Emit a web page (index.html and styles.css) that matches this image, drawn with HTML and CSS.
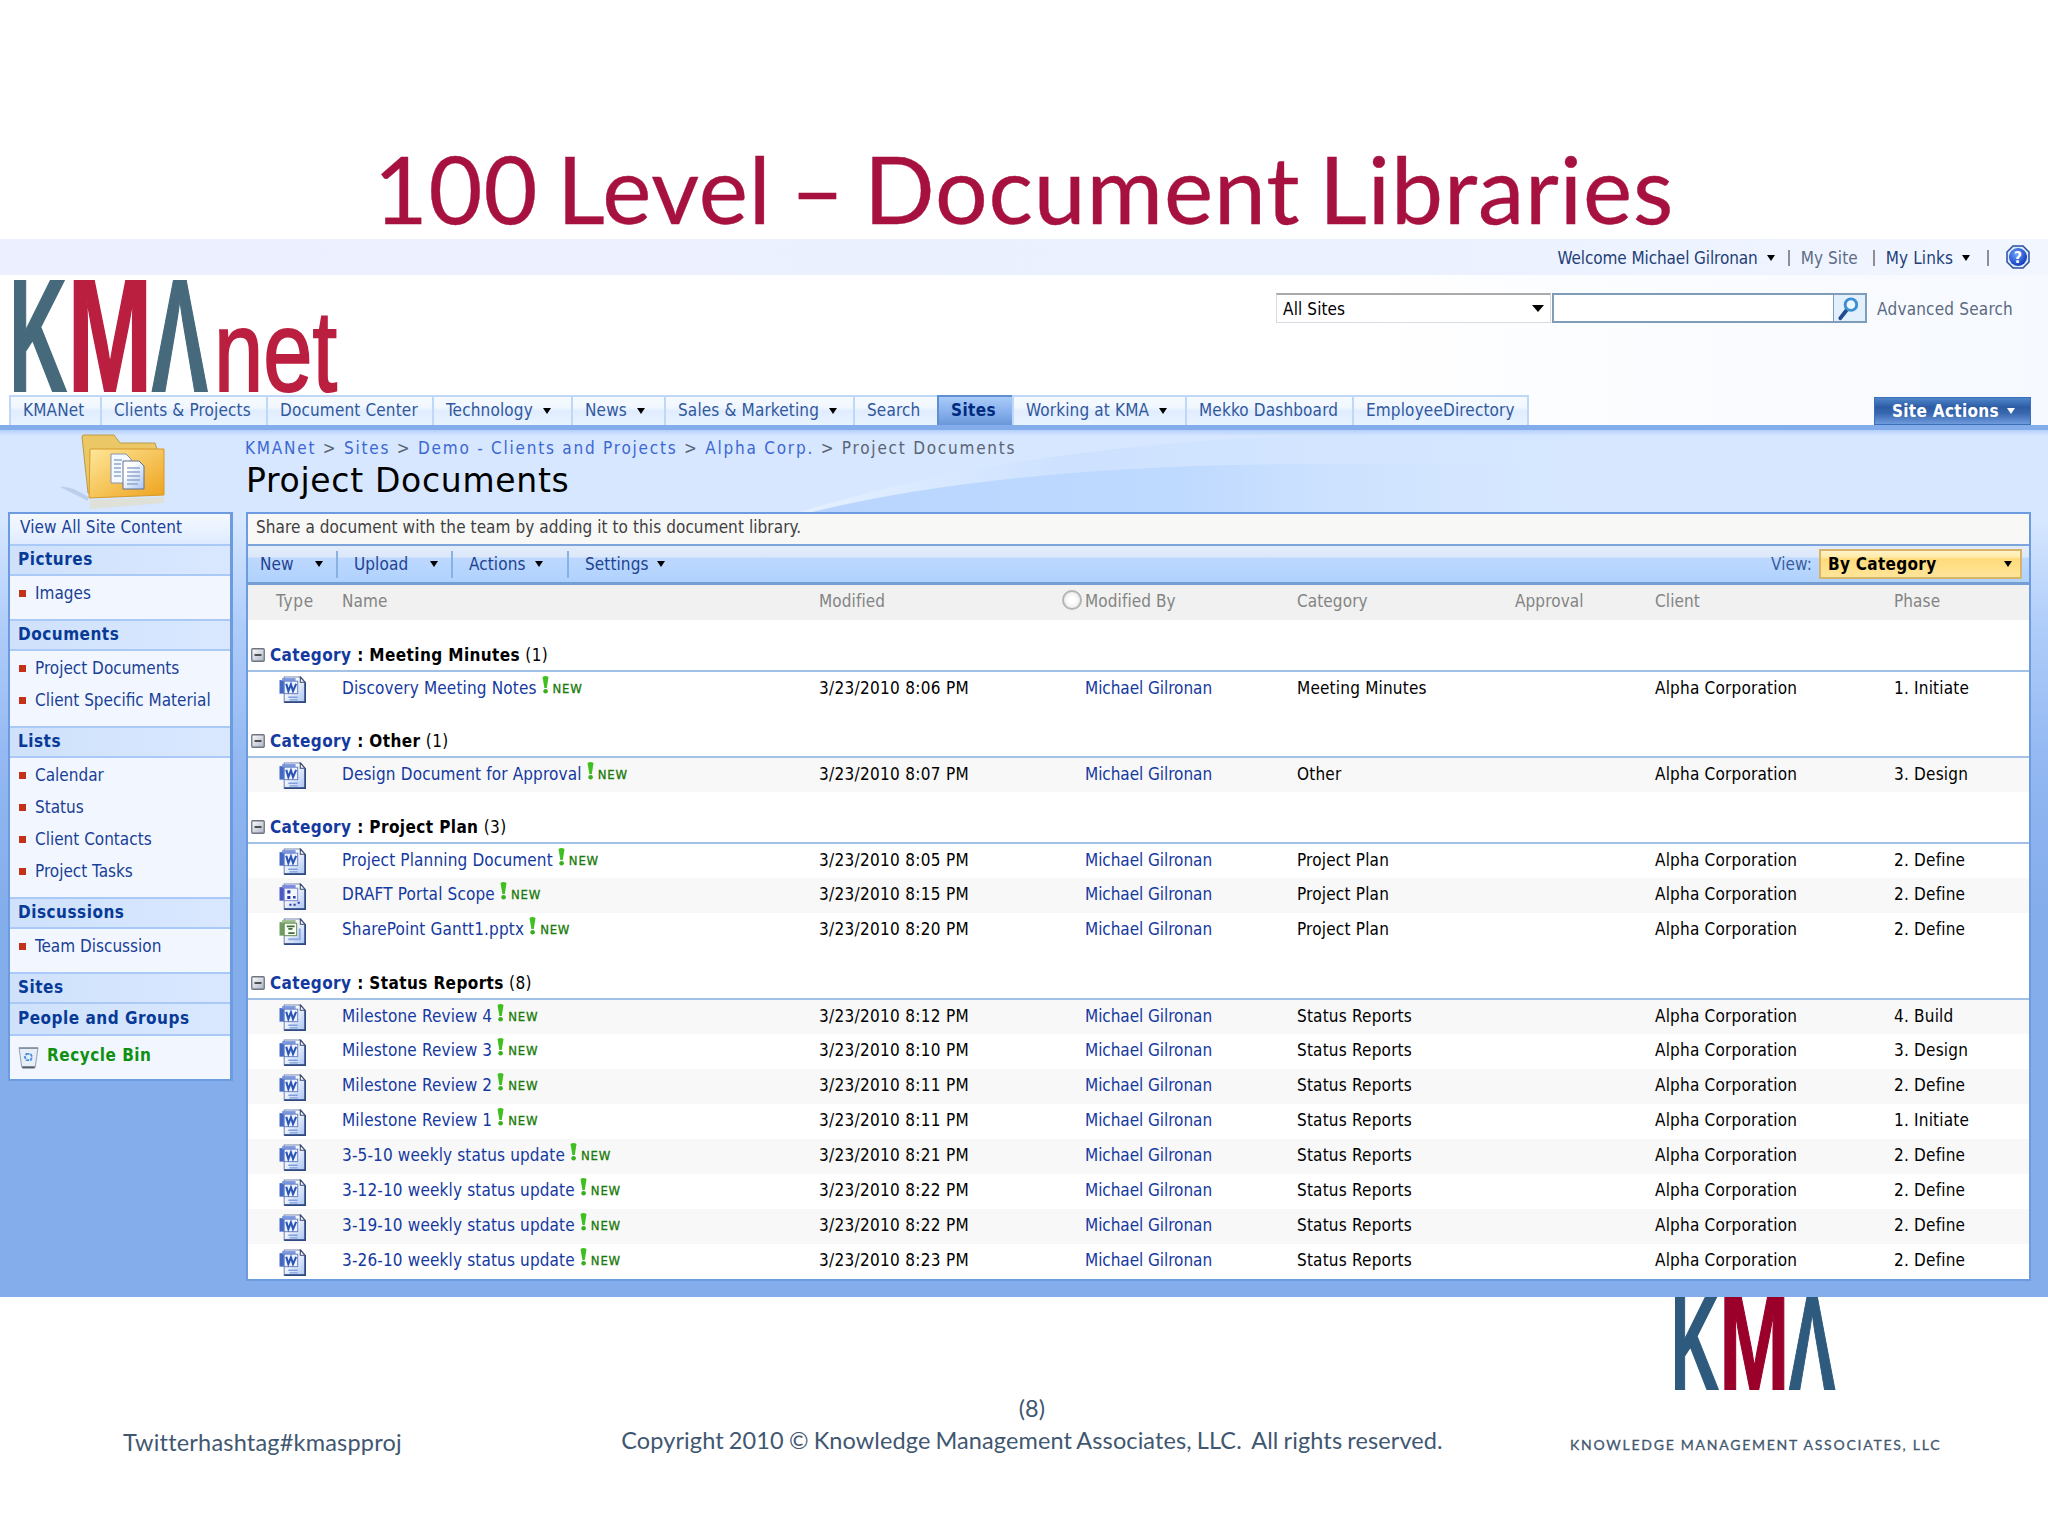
FILE: index.html
```
<!DOCTYPE html>
<html lang="en">
<head>
    <meta charset="UTF-8">
    <meta name="viewport" content="width=device-width, initial-scale=1.0">
    <title>100 Level – Document Libraries</title>
    <link rel="stylesheet" href="styles.css">
</head>
<body>

<!-- Shared icons -->
<svg class="sprite" width="0" height="0">
    <defs>
        <linearGradient id="page" x1="0" y1="0" x2="1" y2="1">
            <stop offset="0.3" stop-color="#fff"/>
            <stop offset="1" stop-color="#a9c4f2"/>
        </linearGradient>
        <linearGradient id="folder" x1="0" y1="0" x2="1" y2="1">
            <stop offset="0" stop-color="#ffe79a"/>
            <stop offset="1" stop-color="#eda21c"/>
        </linearGradient>
        <linearGradient id="box" x1="0" y1="0" x2="1" y2="1">
            <stop offset="0" stop-color="#fff"/>
            <stop offset="1" stop-color="#aab2c4"/>
        </linearGradient>
        <radialGradient id="ball" cx="0.4" cy="0.35" r="0.7">
            <stop offset="0" stop-color="#6aa0ff"/>
            <stop offset="1" stop-color="#0b35b8"/>
        </radialGradient>
    </defs>
    <symbol id="sheet" viewBox="0 0 26 26">
        <path d="M5 1H21L25 6V25H5Z" fill="url(#page)" stroke="#7486b4"/>
        <path d="M25.2 6V25.2H5" fill="none" stroke="#2f4a80" stroke-width="1.6"/>
        <path d="M20.500 1V6H25Z" fill="#fff" stroke="#34466f"/>
    </symbol>
    <symbol id="word" viewBox="0 0 26 26">
        <use href="#sheet"/>
        <path d="M9 20.500H18M10 23H18" stroke="#7ea0de" stroke-width="1.300"/>
        <rect x="0.500" y="4" width="5" height="13" fill="#4169c4"/>
        <rect x="3" y="2" width="13" height="3" fill="#7b98e0"/>
        <rect x="5" y="5" width="13" height="12" fill="#eef3ff" stroke="#6f86c4"/>
        <path d="M7 7.500L9 14.500L11.500 8L13.500 14.500L16.500 7.500" fill="none" stroke="#2b55b4" stroke-width="2"/>
    </symbol>
    <symbol id="draft" viewBox="0 0 26 26">
        <use href="#sheet"/>
        <rect x="0.500" y="4" width="5" height="13" fill="#4c58c4"/>
        <rect x="3" y="2" width="13" height="3" fill="#7b88e0"/>
        <rect x="5" y="5" width="13" height="12" fill="#f4f6ff" stroke="#7f8cd0"/>
        <path d="M8 7H11V10H8ZM8 12.500H11V15.500H8ZM13.500 12.500H16V15H13.500ZM10 20H12V22H10ZM14 20H16V22H14ZM18 18H20V20H18Z" fill="#2a3aa8"/>
    </symbol>
    <symbol id="project" viewBox="0 0 26 26">
        <use href="#sheet"/>
        <path d="M9 20.500H20V10" fill="none" stroke="#8fabe0" stroke-width="2"/>
        <rect x="0.500" y="4" width="5" height="13" fill="#6f9c62"/>
        <rect x="3" y="2" width="13" height="3" fill="#9bbd8c"/>
        <rect x="5" y="5" width="12" height="12" fill="#fbfff6" stroke="#67905a"/>
        <path d="M7.500 8H15M9 10.500H13M9 14.500H15" stroke="#3e6a34" stroke-width="1.600"/>
    </symbol>
    <symbol id="minus" viewBox="0 0 14 14">
        <rect x="0.750" y="0.750" width="12.500" height="12.500" rx="1" fill="url(#box)" stroke="#6e7480" stroke-width="1.300"/>
        <path d="M3.500 7H10.500" stroke="#222" stroke-width="1.500"/>
    </symbol>
    <symbol id="bang" viewBox="0 0 7 18">
        <path d="M0.500 1Q3.500 -1 6.500 1L4.800 12H2.400Z" fill="#3fc020"/>
        <circle cx="3.600" cy="15.300" r="2.300" fill="#3aae1e"/>
    </symbol>
</svg>

<h1 class="slide-title">100 Level – Document Libraries</h1>

<div class="portal">
    <!-- Welcome bar -->
    <div class="topbar">
        <span class="welcome">Welcome Michael Gilronan</span><i class="arrow"></i>
        <b class="sep"></b><span class="grey">My Site</span>
        <b class="sep"></b><span>My Links</span><i class="arrow"></i>
        <b class="sep last"></b>
        <svg class="help" viewBox="0 0 24 24">
            <path d="M7 1H17L23 7V17L17 23H7L1 17V7Z" fill="#dbe8ff" stroke="#2b4f9e" stroke-width="1.500"/>
            <circle cx="12" cy="12" r="9" fill="url(#ball)"/>
            <text x="12" y="18" text-anchor="middle" font-family="DejaVu Sans" font-weight="bold" font-size="16" fill="#fff">?</text>
        </svg>
    </div>

    <!-- Logo and search -->
    <div class="masthead">
        <div class="logo">
            <svg class="kma" viewBox="0 0 196 112">
                <text class="blue" transform="translate(-5.5 112) scale(0.5 1)">K</text>
                <text class="red" transform="translate(53.5 112) scale(0.625 1)">M</text>
                <text class="blue" transform="translate(137.5 112) scale(0.52 1)">Λ</text>
            </svg>
            <svg class="logo-net" viewBox="0 0 122 112">
                <text x="-3" y="111" textLength="123" lengthAdjust="spacingAndGlyphs">net</text>
            </svg>
        </div>
        <div class="search">
            <div class="scope">All Sites<i class="arrow big"></i></div>
            <div class="query"></div>
            <div class="go">
                <svg viewBox="0 0 24 26">
                    <path d="M3 23L10 14" stroke="#23498f" stroke-width="4" stroke-linecap="round"/>
                    <circle cx="14" cy="9" r="6" fill="#eaf7ff" stroke="#3c8fd0" stroke-width="3"/>
                </svg>
            </div>
            <span class="advanced">Advanced Search</span>
        </div>
    </div>

    <!-- Top navigation -->
    <div class="navbar">
        <div class="tabs">
            <a>KMANet</a>
            <a>Clients &amp; Projects</a>
            <a>Document Center</a>
            <a>Technology<i class="arrow"></i></a>
            <a>News<i class="arrow"></i></a>
            <a>Sales &amp; Marketing<i class="arrow"></i></a>
            <a>Search</a>
            <a class="active">Sites</a>
            <a>Working at KMA<i class="arrow"></i></a>
            <a>Mekko Dashboard</a>
            <a>EmployeeDirectory</a>
        </div>
        <div class="site-actions">Site Actions<i class="arrow"></i></div>
    </div>

    <div class="body">
        <svg class="swoosh" viewBox="0 0 2048 867">
            <defs>
                <linearGradient id="sweep" x1="0" x2="1">
                    <stop offset="0" stop-color="#b9d5ff"/>
                    <stop offset="0.500" stop-color="#bfdaff"/>
                    <stop offset="1" stop-color="#d6e7ff" stop-opacity="0"/>
                </linearGradient>
                <linearGradient id="sweep2" x1="0" x2="1">
                    <stop offset="0" stop-color="#e4f0ff"/>
                    <stop offset="0.300" stop-color="#cde1ff"/>
                    <stop offset="1" stop-color="#d6e7ff" stop-opacity="0"/>
                </linearGradient>
            </defs>
            <path d="M800 82Q1050 5 1400 4H1700V82Z" fill="url(#sweep2)"/>
            <path d="M812 82Q1000 36 1300 34L1560 34V82Z" fill="url(#sweep)"/>
        </svg>

        <!-- Page heading -->
        <div class="heading">
            <svg class="folder" viewBox="0 0 120 80">
                <path d="M0 54Q10 52 28 64V68Z" fill="#a9bedd" opacity="0.600"/>
                <path d="M22 4Q22 2 24 2H54L60 10H95L97 16V60H28Z" fill="#ecc765" stroke="#b99a4d"/>
                <path d="M30 16H104V62L29 65Z" fill="url(#folder)" stroke="#d59a28"/>
                <path d="M30 67L104 64V70L30 76Z" fill="#e8d9b0" opacity="0.500"/>
                <g stroke="#8795ac" fill="#f4f8ff">
                    <path d="M51 21H66L71 26V50H51Z"/>
                    <path d="M63 28H79L84 33V56H63Z" stroke="#5f7190" fill="url(#page)"/>
                </g>
                <path d="M54 27H62M54 31H61M54 35H61M54 39H61M54 43H61M67 35H80M67 39H80M67 43H80M67 47H80M67 51H78" stroke="#8ea6cc" stroke-width="1.300"/>
            </svg>
            <div>
                <div class="crumbs"><a>KMANet</a> &gt; <a>Sites</a> &gt; <a>Demo - Clients and Projects</a> &gt; <a>Alpha Corp.</a> &gt; Project Documents</div>
                <h2>Project Documents</h2>
            </div>
        </div>

        <div class="columns">
            <!-- Quick launch -->
            <div class="sidebar">
                <div class="all">View All Site Content</div>
                <h3>Pictures</h3>
                <ul><li>Images</li></ul>
                <h3>Documents</h3>
                <ul><li>Project Documents</li><li>Client Specific Material</li></ul>
                <h3>Lists</h3>
                <ul><li>Calendar</li><li>Status</li><li>Client Contacts</li><li>Project Tasks</li></ul>
                <h3>Discussions</h3>
                <ul><li>Team Discussion</li></ul>
                <h3>Sites</h3>
                <h3>People and Groups</h3>
                <div class="recycle">
                    <svg viewBox="0 0 20 22">
                        <path d="M1 2H19L16.500 20H3.500Z" fill="#e6eef8" stroke="#98a5b5"/>
                        <path d="M1 2H19" stroke="#7e8b9b" stroke-width="1.500"/>
                        <path d="M4 20.500H16" stroke="#55606c" stroke-width="2"/>
                        <path d="M8 7.500H12L13.500 10.500L12 13.500H8L6.500 10.500Z" fill="none" stroke="#4a8fe0" stroke-width="1.800" stroke-dasharray="3 1"/>
                    </svg>
                    Recycle Bin
                </div>
            </div>

            <!-- Document library -->
            <div class="library">
                <div class="desc">Share a document with the team by adding it to this document library.</div>
                <div class="toolbar">
                    <div class="menu new">New<i class="arrow"></i></div>
                    <div class="menu upload">Upload<i class="arrow"></i></div>
                    <div class="menu actions">Actions<i class="arrow"></i></div>
                    <div class="menu settings">Settings<i class="arrow"></i></div>
                    <div class="view">View:<div class="view-select">By Category<i class="arrow"></i></div></div>
                </div>
                <table>
                    <colgroup>
                        <col class="c-type"><col class="c-name"><col class="c-mod"><col class="c-by">
                        <col class="c-cat"><col class="c-app"><col class="c-client"><col>
                    </colgroup>
                    <thead>
                        <tr>
                            <th class="type">Type</th><th>Name</th><th>Modified</th>
                            <th class="by"><i class="presence"></i>Modified By</th>
                            <th>Category</th><th>Approval</th><th>Client</th><th>Phase</th>
                        </tr>
                    </thead>
                    <tbody id="rows"></tbody>
                </table>
            </div>
        </div>
    </div>
</div>

<!-- Slide footer -->
<div class="footer">
    <div class="hashtag">Twitterhashtag#kmaspproj</div>
    <div class="copyright">(8)<br>Copyright 2010 © Knowledge Management Associates, LLC.&nbsp; All rights reserved.</div>
    <div class="brand">
        <svg class="kma" viewBox="0 0 196 112">
            <text class="blue" transform="translate(-5.5 112) scale(0.5 1)">K</text>
            <text class="red" transform="translate(53.5 112) scale(0.625 1)">M</text>
            <text class="blue" transform="translate(137.5 112) scale(0.52 1)">Λ</text>
        </svg>
        <div>KNOWLEDGE MANAGEMENT ASSOCIATES, LLC</div>
    </div>
</div>

<script>
    const groups = [
        ['Meeting Minutes', [
            ['word', 'Discovery Meeting Notes', '8:06', '1. Initiate']
        ]],
        ['Other', [
            ['word', 'Design Document for Approval', '8:07', '3. Design']
        ]],
        ['Project Plan', [
            ['word', 'Project Planning Document', '8:05', '2. Define'],
            ['draft', 'DRAFT Portal Scope', '8:15', '2. Define'],
            ['project', 'SharePoint Gantt1.pptx', '8:20', '2. Define']
        ]],
        ['Status Reports', [
            ['word', 'Milestone Review 4', '8:12', '4. Build'],
            ['word', 'Milestone Review 3', '8:10', '3. Design'],
            ['word', 'Milestone Review 2', '8:11', '2. Define'],
            ['word', 'Milestone Review 1', '8:11', '1. Initiate'],
            ['word', '3-5-10 weekly status update', '8:21', '2. Define'],
            ['word', '3-12-10 weekly status update', '8:22', '2. Define'],
            ['word', '3-19-10 weekly status update', '8:22', '2. Define'],
            ['word', '3-26-10 weekly status update', '8:23', '2. Define']
        ]]
    ];

    let html = '';
    let n = 0;
    groups.forEach(([category, docs]) => {
        html += `<tr class="group"><td colspan="8"><svg class="minus"><use href="#minus"/></svg><b><a>Category</a> : ${category}</b> <span>(${docs.length})</span></td></tr>`;
        docs.forEach(([icon, name, time, phase]) => {
            // every second document gets the grey stripe, counted across groups
            html += `<tr class="doc ${n++ % 2 ? 'alt' : ''}">
                <td><svg class="doc-icon"><use href="#${icon}"/></svg></td>
                <td class="name"><a>${name}</a><svg class="bang"><use href="#bang"/></svg><span class="new-tag">NEW</span></td>
                <td class="date">3/23/2010 ${time} PM</td><td class="person"><a>Michael Gilronan</a></td>
                <td>${category}</td><td></td><td>Alpha Corporation</td><td>${phase}</td></tr>`;
        });
    });
    document.getElementById('rows').innerHTML = html;
</script>

</body>
</html>
```
FILE: styles.css
```
/* General */
* {
    box-sizing: border-box;
}

body {
    margin: 0;
    width: 2048px;
    height: 1536px;
    overflow: hidden;
    background: #fff;
    font-family: "DejaVu Sans Condensed", "DejaVu Sans", sans-serif;
    font-stretch: condensed;
    font-size: 17px;
    letter-spacing: 0.1px;
    color: #000;
}

.sprite {
    display: block;
}

.slide-title {
    margin: 0;
    height: 239px;
    padding-top: 138px;
    font: 400 93px/100px Lato, sans-serif;
    letter-spacing: 0.9px;
    word-spacing: -6px;
    text-align: center;
    color: #a6113f;
    -webkit-text-stroke: 0.4px #a6113f;
}

.arrow {
    display: inline-block;
    width: 0;
    height: 0;
    border: 4.5px solid transparent;
    border-top: 6px solid #000;
    border-bottom: 0;
}

.arrow.big {
    border-width: 7px 6px 0;
}

/* Welcome bar */
.topbar {
    height: 36px;
    display: flex;
    align-items: center;
    justify-content: flex-end;
    padding: 1px 18px 0 0;
    background: linear-gradient(90deg, #ecefff, #ebf1ff 70%, #f1f6ff);
    color: #1f3f77;
}

.topbar .welcome {
    letter-spacing: -0.1px;
}

.topbar .arrow {
    margin: 0 13px 0 9px;
}

.topbar .grey {
    color: #5d6c84;
}

.sep {
    width: 2px;
    height: 16px;
    background: #8c8f98;
    margin: 1px 11px 0 0;
}

.grey + .sep {
    margin-left: 15px;
}

.sep.last {
    margin-left: 4px;
    margin-right: 17px;
}

.help {
    width: 24px;
    height: 24px;
    margin-top: -2px;
}

/* Logo and search */
.masthead {
    height: 120px;
    display: flex;
    justify-content: space-between;
    background: linear-gradient(90deg, #fff 65%, #f6f9ff);
}

.logo {
    display: flex;
    padding: 5px 0 0 14px;
    --blue: #466a7c;
    --red: #bb1f3f;
}

.kma {
    display: block;
    width: 196px;
    height: 112px;
    font-family: "Liberation Sans", sans-serif;
    font-size: 163px;
    font-weight: bold;
    letter-spacing: 0;
    stroke-width: 2px;
}

.kma .blue {
    fill: var(--blue);
    stroke: var(--blue);
}

.kma .red {
    fill: var(--red);
    stroke: var(--red);
}

.logo-net {
    width: 122px;
    height: 112px;
    margin-left: 7px;
    overflow: visible;
    font-family: "Liberation Sans", sans-serif;
    font-size: 115px;
    letter-spacing: 0;
    fill: #bb1f3f;
    stroke: #bb1f3f;
    stroke-width: 2px;
}

.search {
    display: flex;
    align-items: center;
    height: 30px;
    margin: 18px 35px 0 0;
}

.scope {
    display: flex;
    align-items: center;
    justify-content: space-between;
    width: 275px;
    height: 30px;
    padding: 0 6px;
    background: #fff;
    border: 1px solid #d8dce2;
    border-top: 2px solid #aaa;
}

.query {
    width: 283px;
    height: 30px;
    margin-left: 1px;
    background: #fff;
    border: 2px solid #7f9db9;
}

.go {
    width: 33px;
    height: 30px;
    margin-left: -1px;
    padding: 1px 3px;
    background: #e2effc;
    border: 2px solid #7f9db9;
    border-left: 0;
}

.go svg {
    width: 24px;
    height: 25px;
}

.advanced {
    margin-left: 10px;
    padding-top: 1px;
    letter-spacing: 0.2px;
    color: #5b6b80;
}

/* Top navigation */
.navbar {
    height: 35px;
    display: flex;
    justify-content: space-between;
    padding: 0 17px 0 9px;
    background: linear-gradient(90deg, #fff 65%, #f6f9ff);
    border-bottom: 5px solid #83acea;
}

.tabs {
    display: grid;
    grid-template-columns: 91px 166px 166px 139px 93px 189px 84px 75px 173px 167px 177px;
    color: #31589b;
}

.tabs a {
    height: 30px;
    line-height: 26px;
    padding-left: 12px;
    white-space: nowrap;
    letter-spacing: 0.15px;
    background: linear-gradient(#f6faff 0, #f2f8ff 35%, #e0edff 50%, #e9f3ff);
    border: 1px solid #bfd8f8;
    border-width: 2px 0 0 2px;
}

.tabs a:last-child {
    border-right-width: 2px;
}

.tabs .arrow {
    margin-left: 10px;
    vertical-align: 2px;
}

.tabs .active {
    font-weight: bold;
    letter-spacing: 0.4px;
    color: #002b7f;
    background: linear-gradient(#a9cbf8, #8ab2ee 50%, #6b98d9);
    border-color: #5f8fd0;
}

.site-actions {
    width: 157px;
    height: 28px;
    margin-top: 2px;
    padding-left: 17px;
    font-weight: bold;
    line-height: 26px;
    letter-spacing: 0.3px;
    white-space: nowrap;
    color: #fff;
    background: linear-gradient(#4f86cb, #2d5ca4 35%, #3a68b0 60%, #6e9bdc);
    border: 1px solid #3d6fb8;
}

.site-actions .arrow {
    margin-left: 8px;
    vertical-align: 3px;
    border-top-color: #fff;
}

/* Blue body */
.body {
    position: relative;
    height: 867px;
    background: linear-gradient(#b4d0fa 0, #d6e7ff 6px, #d6e7ff 90px, #b1cefa 190px, #93b8f2 330px, #84adeb 480px, #84adeb);
}

.swoosh {
    position: absolute;
    left: 0;
    top: 0;
    width: 2048px;
    height: 867px;
}

.heading {
    position: relative;
    height: 82px;
    display: flex;
}

.folder {
    width: 120px;
    height: 80px;
    margin: 3px 65px 0 60px;
}

.crumbs {
    padding-top: 7px;
    line-height: 22px;
    letter-spacing: 1.77px;
    color: #5a6474;
}

.crumbs a {
    color: #3d68d0;
}

h2 {
    margin: 2px 0 0 1px;
    font: 400 33px/40px "DejaVu Sans", sans-serif;
    letter-spacing: 0.7px;
}

.columns {
    position: relative;
    display: flex;
    align-items: flex-start;
    padding-left: 8px;
}

/* Quick launch */
.sidebar {
    width: 225px;
    margin-right: 13px;
    border: 2px solid #6c9be0;
    border-right-width: 3px;
    background: #f2f7ff;
    color: #1a3f96;
}

.all {
    height: 30px;
    padding-left: 10px;
    line-height: 27px;
    background: linear-gradient(#f5f9ff, #deebff);
}

.sidebar h3 {
    margin: 0;
    height: 32px;
    padding-left: 8px;
    font-size: 17px;
    line-height: 27px;
    letter-spacing: 0.5px;
    color: #073a96;
    background: linear-gradient(90deg, #cfe1fb, #d9e8ff);
    border-top: 2px solid #aac9f6;
    border-bottom: 2px solid #aac9f6;
}

.sidebar h3 + h3 {
    border-top: 0;
    line-height: 29px;
}

.sidebar ul {
    margin: 0;
    padding: 1px 0 10px;
    list-style: none;
}

.sidebar li {
    display: flex;
    align-items: center;
    height: 32px;
    padding-left: 9px;
    letter-spacing: 0;
}

.sidebar li::before {
    content: "";
    width: 7px;
    height: 7px;
    margin-right: 9px;
    background: #c33118;
}

.recycle {
    display: flex;
    align-items: center;
    height: 43px;
    padding: 0 0 5px 8px;
    font-weight: bold;
    letter-spacing: 0.5px;
    color: #109010;
}

.recycle svg {
    width: 21px;
    height: 23px;
    margin: 4px 8px 0 0;
}

/* Document library */
.library {
    width: 1785px;
    border: 2px solid #6c9be0;
    background: #fff;
}

.desc {
    height: 30px;
    padding-left: 8px;
    line-height: 27px;
    letter-spacing: 0.08px;
    color: #3f3f3f;
    background: #f8f8f7;
}

.toolbar {
    display: flex;
    align-items: center;
    height: 41px;
    border-top: 2px solid #7da5dc;
    border-bottom: 3px solid #759fd2;
    background: linear-gradient(#e3ecfa 0, #dce8fa 30%, #bdd8ff 34%, #afd2fd);
    color: #1f4390;
}

.menu {
    display: flex;
    align-items: center;
    justify-content: space-between;
    height: 27px;
    padding: 0 13px 0 16px;
    border-left: 2px solid #89b1e6;
}

.menu.new {
    width: 88px;
    padding-left: 12px;
    border-left: 0;
}

.menu.upload {
    width: 115px;
}

.menu.actions {
    width: 116px;
    padding-right: 24px;
}

.menu.settings {
    width: 98px;
    padding-right: 0;
}

.view {
    display: flex;
    align-items: center;
    margin-left: auto;
    margin-right: 7px;
    color: #3a5f9e;
}

.view-select {
    display: flex;
    align-items: center;
    justify-content: space-between;
    width: 203px;
    height: 30px;
    margin-left: 7px;
    padding: 0 8px 0 7px;
    font-weight: bold;
    letter-spacing: 0.3px;
    color: #000;
    background: linear-gradient(#fff3c9 0, #ffe9a3 25%, #ffdb7a 30%, #ffe59a);
    border: 2px solid #d8b36a;
}

table {
    width: 1781px;
    table-layout: fixed;
    border-collapse: collapse;
}

.c-type { width: 94px; }
.c-name { width: 477px; }
.c-mod { width: 266px; }
.c-by { width: 212px; }
.c-cat { width: 218px; }
.c-app { width: 140px; }
.c-client { width: 239px; }

th, td {
    padding: 0;
    text-align: left;
    white-space: nowrap;
}

th {
    height: 35px;
    padding-bottom: 4px;
    font-weight: 400;
    color: #848484;
    background: #f0f1f0;
    letter-spacing: 0.1px;
}

th.type {
    padding-left: 28px;
    letter-spacing: 0.8px;
}

.presence {
    display: inline-block;
    width: 20px;
    height: 20px;
    margin: 0 3px 0 -23px;
    vertical-align: -3px;
    border: 2px solid #b5b5b5;
    border-radius: 50%;
    background: radial-gradient(#fff 30%, #dedede);
}

.group td {
    height: 51px;
    padding: 19px 0 0 3px;
    border-bottom: 2px solid #a3c0e6;
    letter-spacing: 0.4px;
}

.minus {
    width: 14px;
    height: 14px;
    margin-right: 5px;
    vertical-align: -1px;
}

td a {
    color: #1439a0;
}

.doc td {
    height: 35px;
    padding-bottom: 3px;
    letter-spacing: 0.2px;
}

.doc.alt {
    background: #f8f8f8;
}

.doc td.name {
    letter-spacing: 0.15px;
}

.doc td.date {
    letter-spacing: 0.3px;
}

.doc td.person {
    letter-spacing: -0.05px;
}

.doc-icon {
    display: block;
    width: 27px;
    height: 27px;
    margin: 4px 0 0 31px;
}

.bang {
    width: 7px;
    height: 18px;
    margin: -4px 4px 0 5px;
    vertical-align: 0;
}

.new-tag {
    position: relative;
    top: -1px;
    font-size: 13px;
    letter-spacing: 0.8px;
    color: #187a08;
    -webkit-text-stroke: 0.3px #187a08;
}

/* Slide footer */
.footer {
    display: grid;
    grid-template-columns: 620px 824px 604px;
    font: 23.5px/32px Lato, sans-serif;
    letter-spacing: 0.2px;
    word-spacing: -1px;
    color: #3f5770;
}

.hashtag {
    padding: 129px 0 0 123px;
}

.copyright {
    padding-top: 95px;
    letter-spacing: 0.1px;
    text-align: center;
    white-space: nowrap;
}

.brand {
    padding-left: 126px;
    --blue: #2d5a7d;
    --red: #9b002b;
}

.brand .kma {
    width: 162px;
    height: 93px;
    margin-left: 105px;
}

.brand div {
    margin-top: 45px;
    font-size: 14px;
    line-height: 20px;
    letter-spacing: 1.75px;
    word-spacing: 0;
    white-space: nowrap;
    -webkit-text-stroke: 0.3px #3f5770;
}
```
